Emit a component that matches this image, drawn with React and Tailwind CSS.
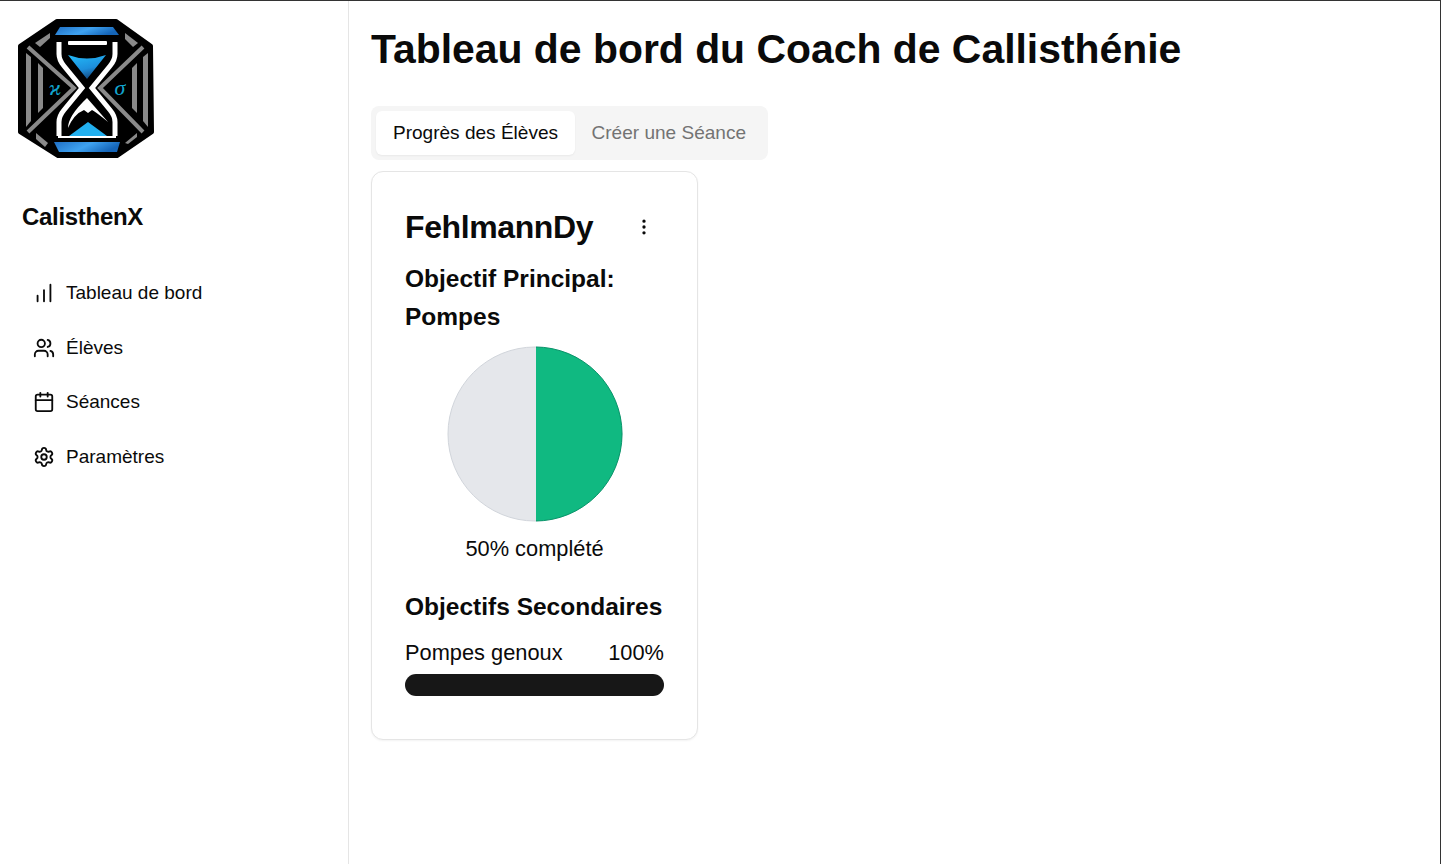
import React from 'react';
import { ChartNoAxesColumnIncreasing, Users, Calendar, Settings, MoreVertical } from 'lucide-react';

const navItems = [
  { label: 'Tableau de bord', icon: ChartNoAxesColumnIncreasing },
  { label: 'Élèves', icon: Users },
  { label: 'Séances', icon: Calendar },
  { label: 'Paramètres', icon: Settings },
];

function Logo() {
  return (
    <svg width="136" height="140" viewBox="18 19 136 140" className="block">
      <defs>
        <linearGradient id="bar" x1="0" y1="0" x2="1" y2="0.3">
          <stop offset="0" stopColor="#1f6fc4" />
          <stop offset="0.55" stopColor="#3fa2f0" />
          <stop offset="1" stopColor="#1565b8" />
        </linearGradient>
        <linearGradient id="sand" x1="0.3" y1="0" x2="0.7" y2="1">
          <stop offset="0" stopColor="#22b5f5" />
          <stop offset="0.55" stopColor="#1d8fdc" />
          <stop offset="1" stopColor="#123e70" />
        </linearGradient>
      </defs>
      <polygon points="57,21 116,21 151,46 152,132 117,156 58,156 20,132 20,46" fill="#000" stroke="#000" strokeWidth="4" strokeLinejoin="round" />
      <polygon points="55,35 60,27 113,27 119,35" fill="url(#bar)" />
      <polygon points="54,142 120,142 117,152 59,152" fill="url(#bar)" />
      <g fill="#8a8a8a">
        <polygon points="26,53 31,57 31,121 26,127" />
        <polygon points="38,63 43,68 43,108 38,113" />
        <polygon points="148,53 143,57 143,121 148,127" />
        <polygon points="137,63 132,68 132,108 137,113" />
        <polygon points="35,43 50,33 50,38 40,47" />
        <polygon points="125,33 138,43 133,47 125,39" />
        <polygon points="36,133 48,143 45,147 36,139" />
        <polygon points="125,143 137,133 137,137 128,144" />
      </g>
      <g fill="none" stroke="#8a8a8a" strokeWidth="4">
        <polyline points="28,47 74,88 28,132" />
        <polyline points="143,47 100,88 143,132" />
      </g>
      <g fill="none" stroke="#fff" strokeWidth="5">
        <path d="M59 42 V54 Q59 60 64 66 L82 88 L64 110 Q59 116 59 122 V136" />
        <path d="M115 42 V54 Q115 60 110 66 L92 88 L110 110 Q115 116 115 122 V136" />
      </g>
      <rect x="68" y="41" width="39" height="4" rx="1" fill="#fff" />
      <path d="M68 55 Q87 62 106 55 L87 79 Z" fill="url(#sand)" />
      <polygon points="69,136 107,136 88,122" fill="#22b0f0" />
      <polygon points="58,136 116,136 116,138 58,138" fill="#fff" />
      <path d="M87 98 L108 122 Q96 112 92 110 L88 113 L84 110 Q74 114 68 128 Q68 116 87 98 Z" fill="#fff" />
      <text x="55" y="95" textAnchor="middle" fontFamily="'Liberation Serif', serif" fontStyle="italic" fontSize="22" fill="#12a5cf">ϰ</text>
      <text x="120" y="95" textAnchor="middle" fontFamily="'Liberation Serif', serif" fontStyle="italic" fontSize="22" fill="#12a5cf">σ</text>
    </svg>
  );
}

function Sidebar() {
  return (
    <aside className="w-[349px] shrink-0 border-r border-[#e5e5e5] pl-[18px] pt-[18px]">
      <Logo />
      <h2 className="mt-[43px] ml-1 text-[24px] leading-[30px] font-bold tracking-[-0.3px] text-[#0a0a0a]">CalisthenX</h2>
      <nav className="mt-[34px] ml-[15px] flex flex-col">
        {navItems.map((item) => (
          <div key={item.label} className="flex h-[54.5px] items-center gap-[11px] text-[19px] text-[#0a0a0a]">
            <item.icon size={22} strokeWidth={2} />
            <span>{item.label}</span>
          </div>
        ))}
      </nav>
    </aside>
  );
}

function ProgressCard() {
  return (
    <div className="w-[327px] rounded-xl border border-[#e5e5e5] bg-white px-[33px] pt-[33px] pb-[43px] shadow-xs">
      <div className="flex items-center justify-between pr-[10px]">
        <h3 className="text-[32px] leading-[44px] font-bold tracking-[-0.4px] text-[#0a0a0a]">FehlmannDy</h3>
        <MoreVertical size={20} className="text-[#0a0a0a]" />
      </div>
      <h4 className="mt-[11px] text-[24.5px] leading-[38px] font-bold text-[#0a0a0a]">Objectif Principal: Pompes</h4>
      <div className="mt-[10px] flex flex-col items-center">
        <svg width="176" height="176" viewBox="0 0 176 176">
          <defs>
            <clipPath id="rightHalf">
              <rect x="89" y="0" width="87" height="176" />
            </clipPath>
          </defs>
          <circle cx="88" cy="88" r="87" fill="#e5e7eb" stroke="#d1d5db" strokeWidth="1" />
          <circle cx="88" cy="88" r="87" fill="#10b981" stroke="#059669" strokeWidth="1" clipPath="url(#rightHalf)" />
        </svg>
        <p className="mt-[13px] text-[21.8px] leading-[28px] text-[#0a0a0a]">50% complété</p>
      </div>
      <h4 className="mt-[25px] text-[24.5px] leading-[38px] font-bold text-[#0a0a0a]">Objectifs Secondaires</h4>
      <div className="mt-[13px] flex justify-between text-[21.8px] leading-[28px] text-[#0a0a0a]">
        <span>Pompes genoux</span>
        <span>100%</span>
      </div>
      <div className="mt-[7px] h-[22px] rounded-full bg-[#171717]" />
    </div>
  );
}

export default function App() {
  return (
    <div className="flex h-[864px] border-t border-r border-[#333] bg-white font-['Liberation_Sans',sans-serif]">
      <Sidebar />
      <main className="min-w-0 flex-1 px-[22px]">
        <h1 className="mt-[22px] text-[40.9px] leading-[52px] font-bold text-[#0a0a0a]">Tableau de bord du Coach de Callisthénie</h1>
        <div className="mt-[31px] inline-flex h-[54px] items-center rounded-lg bg-[#f5f5f5] p-[5px]">
          <div className="flex h-[44px] items-center rounded-md bg-white px-[17px] text-[19.05px] text-[#0a0a0a] shadow-xs">Progrès des Élèves</div>
          <div className="flex h-[44px] items-center px-[16.5px] text-[19.05px] text-[#737373]">Créer une Séance</div>
        </div>
        <div className="mt-[11px]">
          <ProgressCard />
        </div>
      </main>
    </div>
  );
}
